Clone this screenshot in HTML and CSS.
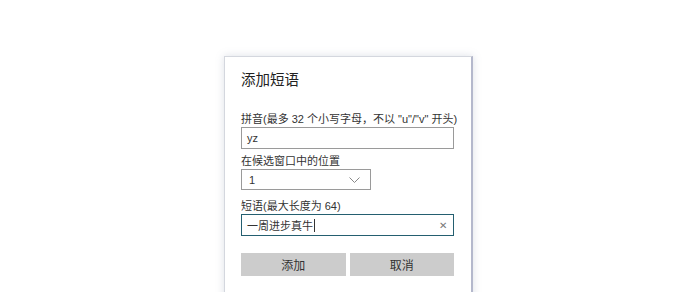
FILE: index.html
```html
<!DOCTYPE html>
<html lang="zh-CN">
<head>
    <meta charset="UTF-8">
    <title>添加短语</title>
    <link rel="stylesheet" href="styles.css">
</head>
<body>
    <div class="dialog">
        <div class="title">添加短语</div>

        <div class="label">拼音(最多 32 个小写字母，不以 "u"/"v" 开头)</div>
        <div class="field">yz</div>

        <div class="label gap-sm">在候选窗口中的位置</div>
        <div class="select">
            <span>1</span>
            <svg class="chevron" width="11" height="6" viewBox="0 0 11 6">
                <path d="M0.5 0.5 L5.5 5.5 L10.5 0.5" fill="none" stroke="#888" stroke-width="1"/>
            </svg>
        </div>

        <div class="label gap-lg">短语(最大长度为 64)</div>
        <div class="field focus">
            <span class="value">一周进步真牛</span><span class="caret"></span>
            <span class="clear">✕</span>
        </div>

        <div class="actions">
            <button class="btn">添加</button>
            <button class="btn">取消</button>
        </div>
    </div>
</body>
</html>
```

FILE: styles.css
```css
body {
    margin: 0;
    background: #fff;
    font-family: "Liberation Sans", "Noto Sans CJK SC", sans-serif;
    color: #333;
    padding: 56px 0 0 224px;
    overflow: hidden;
}

.dialog {
    width: 213px;
    padding: 13px 17px 40px 16px;
    background: #fff;
    border: 1px solid #d4d7de;
    border-right: 2px solid #b4b8cc;
    box-shadow: 0 0 8px rgba(120, 130, 160, 0.25);
}

.title {
    font-size: 14.5px;
    line-height: 20px;
    color: #222;
    margin-bottom: 21px;
}

.label {
    font-size: 11px;
    line-height: 16px;
    color: #333;
    white-space: nowrap;
}

.label.gap-sm {
    margin-top: 4px;
}

.label.gap-lg {
    margin-top: 8px;
}

.field {
    height: 20px;
    border: 1px solid #9a9a9a;
    display: flex;
    align-items: center;
    padding: 0 5px;
    font-size: 11px;
    color: #333;
}

.field.focus {
    border-color: #245f70;
    padding-right: 6px;
}

.caret {
    width: 1px;
    height: 13px;
    background: #333;
    margin-left: 1px;
}

.clear {
    margin-left: auto;
    font-size: 10px;
    color: #777;
}

.select {
    width: 111px;
    height: 19px;
    border: 1px solid #9a9a9a;
    display: flex;
    align-items: center;
    justify-content: space-between;
    padding: 0 10px 0 7px;
    font-size: 11px;
}

.actions {
    display: flex;
    gap: 4px;
    margin-top: 17px;
}

.btn {
    flex: 1;
    height: 23px;
    border: none;
    background: #cccccc;
    font-family: inherit;
    font-size: 12px;
    color: #333;
    padding: 0;
}
```
